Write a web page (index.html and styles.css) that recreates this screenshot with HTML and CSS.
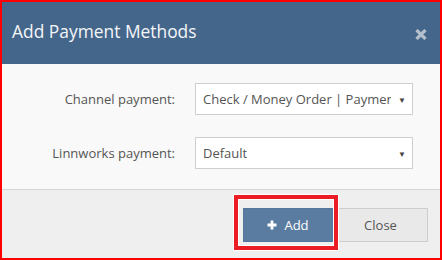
FILE: index.html
```html
<!DOCTYPE html>
<html lang="en">
<head>
  <meta charset="UTF-8" />
  <title>Add Payment Methods</title>
  <link rel="stylesheet" href="styles.css">
</head>
<body>
  <div class="frame">
    <div class="modal-header">
      <h4 class="modal-title">Add Payment Methods</h4>
      <span class="close">
        <svg width="12" height="11" viewBox="0 0 12 11">
          <path d="M1.5 1 L10.5 10 M10.5 1 L1.5 10" stroke="#b3bfcc" stroke-width="3.2" />
        </svg>
      </span>
    </div>

    <div class="modal-body">
      <label class="label">Channel payment:</label>
      <div class="select">
        <span class="value">Check / Money Order | Payment</span>
        <span class="caret">▼</span>
      </div>

      <label class="label">Linnworks payment:</label>
      <div class="select">
        <span class="value">Default</span>
        <span class="caret">▼</span>
      </div>
    </div>

    <div class="modal-footer">
      <button class="btn btn-primary">
        <svg width="10" height="10" viewBox="0 0 10 10">
          <path d="M5 0.5 V9.5 M0.5 5 H9.5" stroke="#fff" stroke-width="2.8" />
        </svg>
        Add
      </button>
      <button class="btn btn-default">Close</button>
    </div>

    <!-- destaque vermelho do print -->
    <div class="highlight"></div>
  </div>
</body>
</html>
```

FILE: styles.css
```css
* {
  box-sizing: border-box;
  margin: 0;
  padding: 0;
}

body {
  font-family: 'Open Sans', 'Liberation Sans', sans-serif;
  background: #fff;
}

.frame {
  position: relative;
  width: 442px;
  height: 260px;
  border: 2px solid #ff0000;
  background: #efefef;
}

.modal-header {
  display: flex;
  align-items: center;
  justify-content: space-between;
  height: 62px;
  padding: 0 13px 4px 10px;
  background: #45668b;
}

.modal-title {
  font-size: 17.4px;
  font-weight: normal;
  line-height: 24px;
  color: #f4f6f8;
}

.close {
  display: flex;
  margin-top: 6px;
}

.modal-body {
  display: grid;
  grid-template-columns: 173px 218px;
  column-gap: 20px;
  row-gap: 22px;
  align-items: center;
  padding: 19px 0 20px;
  background: #f9f9f9;
  border-bottom: 1px solid #d6d6d6;
}

.label {
  text-align: right;
  font-size: 13px;
  color: #555;
}

.select {
  position: relative;
  height: 32px;
  padding: 0 21px 0 7px;
  display: flex;
  align-items: center;
  background: #fff;
  border: 1px solid #cfcfcf;
  font-size: 13px;
  color: #555;
}

.value {
  white-space: nowrap;
  overflow: hidden;
}

.caret {
  position: absolute;
  right: 6px;
  top: 10px;
  font-size: 8px;
  color: #444;
}

.modal-footer {
  display: flex;
  justify-content: flex-end;
  padding: 18px 12px 0;
}

.btn {
  height: 34px;
  font-family: inherit;
  font-size: 13px;
  border: 1px solid transparent;
  display: flex;
  align-items: center;
  justify-content: center;
  gap: 7px;
}

.btn-primary {
  width: 90px;
  background: #5b7ca1;
  border-color: #56779c;
  color: #fff;
}

.btn-default {
  width: 95px;
  background: #e9e9e9;
  border-color: #cdcdcd;
  color: #555;
}

.highlight {
  position: absolute;
  left: 232px;
  top: 193px;
  width: 104px;
  height: 55px;
  border: 4px solid #ec1c24;
  box-shadow: inset 0 0 0 1px #fff, 0 0 0 1px #fff;
}
```
